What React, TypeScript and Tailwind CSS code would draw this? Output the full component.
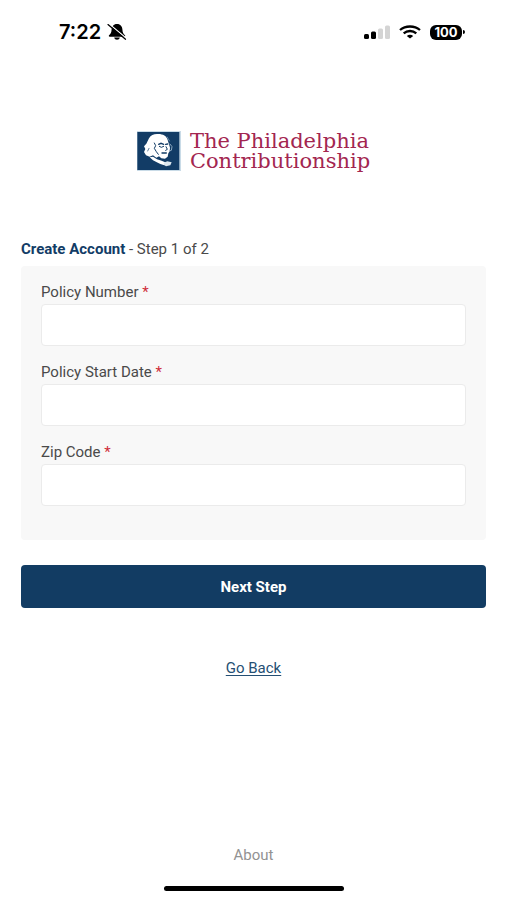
import React from 'react';

const FIELDS = [
    { id: 'policy-number', label: 'Policy Number' },
    { id: 'policy-start-date', label: 'Policy Start Date' },
    { id: 'zip-code', label: 'Zip Code' },
];

const StatusBar: React.FC = () => (
    <div className="flex h-16 items-center justify-between pl-[59px] pr-[42px] text-black">
        <div className="flex items-center gap-[6px]">
            <span className="font-['Inter',sans-serif] text-[20px] font-semibold leading-6">7:22</span>
            <svg width="20" height="18" viewBox="0 0 20 18" aria-label="Silent mode">
                <path d="M10 1C6.4 1 4.8 3.6 4.6 6.4C4.5 9.4 3.6 10.6 2 12.2C1.6 12.9 1.8 13.7 2.7 13.7H17.3C18.2 13.7 18.4 12.9 18 12.2C16.4 10.6 15.5 9.4 15.4 6.4C15.2 3.6 13.6 1 10 1Z" fill="black" />
                <path d="M7.2 14.5H12.8C12.5 15.8 11.4 16.8 10 16.8S7.5 15.8 7.2 14.5Z" fill="black" />
                <path d="M2.2 1L19 15" stroke="white" strokeWidth="1.2" />
                <path d="M1 1.6L18.5 16.2" stroke="black" strokeWidth="1.3" strokeLinecap="round" />
            </svg>
        </div>
        <div className="flex items-center gap-[9px]">
            <svg width="26" height="14" viewBox="0 0 26 14" aria-label="Signal">
                <rect x="0" y="9" width="5" height="5" rx="1.5" fill="black" />
                <rect x="7" y="6.5" width="5" height="7.5" rx="1.5" fill="black" />
                <rect x="14" y="3.5" width="5" height="10.5" rx="1.5" fill="#d4d4d4" />
                <rect x="21" y="0.5" width="5" height="13.5" rx="1.5" fill="#d4d4d4" />
            </svg>
            <svg width="22" height="14" viewBox="0 0 22 14" fill="none" stroke="black" strokeWidth="2.3" aria-label="Wi-Fi">
                <path d="M1 5C6.5 0.3 15.5 0.3 21 5" />
                <path d="M4.7 8.3C8.2 5.2 13.8 5.2 17.3 8.3" />
                <path d="M11 13.5L7.8 10.9C9.6 9.4 12.4 9.4 14.2 10.9Z" fill="black" stroke="none" />
            </svg>
            <div className="flex items-center gap-px">
                <span className="flex h-[15px] w-8 items-center justify-center rounded-md bg-black font-['Inter',sans-serif] text-[13px] font-bold leading-none text-white">
                    100
                </span>
                <span className="h-1 w-[2px] rounded-r-full bg-black"></span>
            </div>
        </div>
    </div>
);

const Portrait: React.FC = () => (
    <svg width="44" height="40" viewBox="0 0 132 120" aria-hidden="true">
        <rect width="132" height="120" fill="#c9dbe7" />
        <rect x="1" y="3" width="126" height="114" fill="#123c66" />
        {/* head and hair */}
        <path
            d="M36 22C42 11 52 8 64 9C78 9 89 15 92 27L96 40L99 50L98 61L94 67L92 77L84 83L73 82L66 76L58 80L48 73L38 77L27 73L21 63L25 54L21 46L28 38Z"
            fill="white"
        />
        {/* collar */}
        <path d="M38 79L48 77L60 85L74 89L88 95L82 103L70 99L58 93L48 88Z" fill="white" />
        <path d="M80 95L91 91L104 94L100 103L87 106L80 101Z" fill="#dce6ee" />
        {/* brow, spectacles, nose and mouth */}
        <g fill="none" stroke="#123c66" strokeLinecap="round">
            <path d="M52 36L56 44L52 52L58 62L64 70" strokeWidth="3" />
            <path d="M65 40L72 37L80 40" strokeWidth="4" />
            <path d="M67 46L73 49L80 46" strokeWidth="3" />
            <path d="M86 40L92 39" strokeWidth="4" />
            <path d="M87 47L91 55L86 58" strokeWidth="3" />
            <path d="M75 66L88 66" strokeWidth="4" />
            <path d="M36 52L32 60" strokeWidth="2" />
        </g>
        <path d="M90 17L98 31" stroke="#6288a9" strokeWidth="3" />
        <path d="M98 38L105 47L103 58L97 60" fill="none" stroke="#8faac1" strokeWidth="3" />
    </svg>
);

const Logo: React.FC = () => (
    <div className="flex items-center justify-center gap-[9px]">
        <Portrait />
        <div className="font-['DejaVu_Serif',serif] text-[21px] leading-5 text-[#a32650]">
            <div>The Philadelphia</div>
            <div>Contributionship</div>
        </div>
    </div>
);

export default function App() {
    return (
        <div className="flex min-h-screen flex-col bg-white font-['Roboto',sans-serif] text-[15px] leading-5 text-[#4a4a4a]">
            <StatusBar />
            <main className="flex flex-1 flex-col px-[21px] pt-[67px]">
                <Logo />
                <form className="mt-[68px]" onSubmit={(e) => e.preventDefault()}>
                    <h1>
                        <span className="font-bold text-[#123c66]">Create Account</span> - Step 1 of 2
                    </h1>
                    <div className="mt-[7px] flex flex-col gap-4 rounded bg-[#f8f8f8] px-5 pb-[34px] pt-4">
                        {FIELDS.map((field) => (
                            <div key={field.id}>
                                <label htmlFor={field.id}>
                                    {field.label} <span className="text-[#cf2e3a]">*</span>
                                </label>
                                <input
                                    id={field.id}
                                    type="text"
                                    required
                                    className="mt-[2px] block h-[42px] w-full rounded border border-[#ebebeb] bg-white px-3 shadow-none outline-none"
                                />
                            </div>
                        ))}
                    </div>
                    <button type="submit" className="mt-[25px] h-[43px] w-full rounded bg-[#123c63] font-bold text-white">
                        Next Step
                    </button>
                </form>
                <a href="#back" className="mt-[50px] self-center text-[#254f73] underline underline-offset-2">
                    Go Back
                </a>
            </main>
            <footer className="flex flex-col items-center pb-[9px]">
                <a href="#about" className="text-[#929292]">
                    About
                </a>
                <div className="mt-[21px] h-[5px] w-[180px] rounded-full bg-black"></div>
            </footer>
        </div>
    );
}
